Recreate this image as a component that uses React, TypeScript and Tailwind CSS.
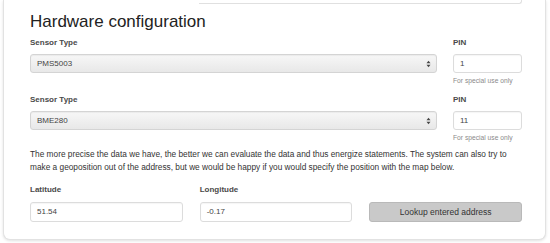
const selectCls =
  "flex h-[19px] items-center justify-between rounded-[3px] border border-[#d4d4d4] bg-gradient-to-b from-[#f7f7f7] to-[#e8e8e8] pl-[6px] pr-[5px] text-[8px] text-[#444] shadow-[inset_0_1px_1px_rgba(0,0,0,0.05)]";
const inputCls =
  "flex h-[19px] items-center rounded-[3px] border border-[#dcdcdc] bg-white px-[6px] text-[8px] text-[#444] shadow-[inset_0_1px_1px_rgba(0,0,0,0.04)]";
const labelCls = "mb-[6px] text-[8px] font-bold leading-[10px] text-[#4a4a4a]";

function Arrows() {
  return (
    <svg width="5" height="8" viewBox="0 0 5 8" className="text-[#444]">
      <path d="M0.5 3.2 L2.5 0.8 L4.5 3.2 Z" fill="currentColor" />
      <path d="M0.5 4.8 L2.5 7.2 L4.5 4.8 Z" fill="currentColor" />
    </svg>
  );
}

function SensorRow({ sensor, pin }: { sensor: string; pin: string }) {
  return (
    <div className="flex gap-[16px]">
      <div className="flex-1">
        <p className={labelCls}>Sensor Type</p>
        <div className={selectCls}>
          <span>{sensor}</span>
          <Arrows />
        </div>
      </div>
      <div className="w-[69px]">
        <p className={labelCls}>PIN</p>
        <div className={inputCls}>{pin}</div>
        <p className="mt-[3px] text-[6.7px] leading-[9px] text-[#8a8a8a]">For special use only</p>
      </div>
    </div>
  );
}

export default function App() {
  return (
    <div
      className="h-[243px] w-[550px] overflow-hidden bg-white"
      style={{ fontFamily: '"Liberation Sans", Arial, sans-serif' }}
    >
      <div className="mx-[3px] mr-[4px] h-[240px] rounded-b-[7px] border-x border-b border-[#e2e2e2] bg-white pl-[26px] pr-[23px] shadow-[0_1px_3px_rgba(0,0,0,0.12)]">
        <div className="ml-[169px] h-[4px] w-[323px] rounded-br-[3px] border-b border-r border-[#e0e0e0]" />
        <h2 className="mt-[8px] text-[17px] leading-[20px] font-normal text-[#222]">Hardware configuration</h2>
        <div className="mt-[6px] flex flex-col gap-[10px]">
          <SensorRow sensor="PMS5003" pin="1" />
          <SensorRow sensor="BME280" pin="11" />
        </div>
        <p className="mt-[6px] text-[8.3px] leading-[13px] text-[#333]">
          The more precise the data we have, the better we can evaluate the data and thus energize statements. The
          system can also try to make a geoposition out of the address, but we would be happy if you would specify the
          position with the map below.
        </p>
        <div className="mt-[11px] grid grid-cols-3 gap-[17px]">
          <div>
            <p className="mb-[7px] text-[8px] font-bold leading-[10px] text-[#4a4a4a]">Latitude</p>
            <div className={inputCls + " !h-[20px]"}>51.54</div>
          </div>
          <div>
            <p className="mb-[7px] text-[8px] font-bold leading-[10px] text-[#4a4a4a]">Longitude</p>
            <div className={inputCls + " !h-[20px]"}>-0.17</div>
          </div>
          <div className="flex items-end">
            <button className="flex h-[20px] w-full items-center justify-center rounded-[3px] border border-[#b9b9b9] bg-[#c9c9c9] text-[8.5px] text-[#333]">
              Lookup entered address
            </button>
          </div>
        </div>
      </div>
    </div>
  );
}
